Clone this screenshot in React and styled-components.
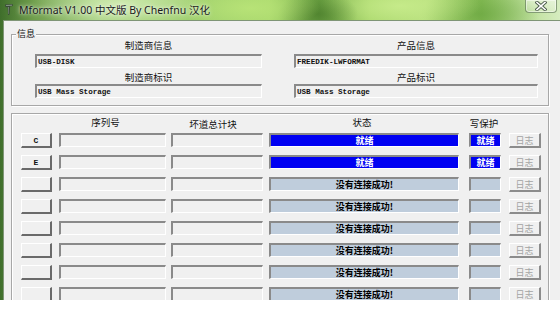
import React from "react";
import styled, { createGlobalStyle } from "styled-components";

const Global = createGlobalStyle`
  html, body { margin: 0; padding: 0; background: #ffffff; }
  body { font-family: "Noto Sans CJK SC", "Noto Sans", sans-serif; }
  * { box-sizing: border-box; }
`;

const CJK = `"Noto Sans CJK SC", "Noto Sans", sans-serif`;

const Window = styled.div`
  width: 560px;
  height: 300px;
  overflow: hidden;
  display: flex;
  flex-direction: column;
  background:
    radial-gradient(ellipse 90px 26px at 120px 4px, rgba(215, 240, 185, 0.85), transparent),
    radial-gradient(ellipse 70px 22px at 250px 8px, rgba(185, 228, 120, 0.9), transparent),
    radial-gradient(ellipse 40px 22px at 318px 14px, rgba(70, 120, 40, 0.7), transparent),
    radial-gradient(ellipse 80px 24px at 400px 6px, rgba(200, 236, 140, 0.9), transparent),
    radial-gradient(ellipse 60px 24px at 480px 14px, rgba(100, 160, 60, 0.6), transparent),
    linear-gradient(90deg, #3f6e2b 0%, #6f9e4c 6%, #a4cf80 18%, #9fcf6e 34%, #a9d86c 48%, #6da444 57%, #a8d66a 66%, #b6de7c 76%, #86bd55 86%, #c4e3a4 96%, #d6ecc0 100%);
  background-size: 100% 100%;
`;

const TitleBar = styled.div`
  height: 20px;
  flex: none;
  display: flex;
  align-items: flex-start;
  padding-left: 4px;
  padding-right: 3px;
`;

const AppIcon = styled.svg`
  width: 10px;
  height: 13px;
  margin-top: 3px;
  flex: none;
`;

const Title = styled.div`
  margin-left: 5px;
  margin-top: 3px;
  font-family: "Noto Sans", ${CJK};
  font-size: 10.5px;
  line-height: 14px;
  color: #1a1a1a;
  white-space: nowrap;
  text-shadow: 0 0 5px rgba(255, 255, 255, 0.9), 0 0 2px rgba(255, 255, 255, 0.6);
`;

const CloseButton = styled.div`
  margin-left: auto;
  width: 32px;
  height: 13px;
  border: 1px solid rgba(60, 90, 50, 0.55);
  border-top: none;
  border-radius: 0 0 4px 4px;
  background: linear-gradient(180deg, rgba(255, 255, 255, 0.45), rgba(255, 255, 255, 0.2));
  box-shadow: inset 0 0 0 1px rgba(255, 255, 255, 0.45);
  display: flex;
  align-items: center;
  justify-content: center;
`;

const Client = styled.div`
  flex: 1;
  margin-left: 3px;
  background: #f0f0f0;
  box-shadow: inset 1px 1px 0 #7f9576;
  display: flex;
  flex-direction: column;
  padding: 14px 0 0 8px;
`;

const GroupBox = styled.div`
  position: relative;
  width: 538px;
  height: 72px;
  border: 1px solid #a7a7a7;
  box-shadow: inset 1px 1px 0 #ffffff, 1px 1px 0 #ffffff;
  padding: 4px 10px 0 23px;
  display: grid;
  grid-template-columns: 227px 244px;
  column-gap: 32px;
`;

const Legend = styled.span`
  position: absolute;
  left: 4px;
  top: -7px;
  padding: 0 1px;
  background: #f0f0f0;
  font-family: ${CJK};
  font-size: 9px;
  line-height: 12px;
  color: #111;
`;

const InfoColumn = styled.div`
  display: flex;
  flex-direction: column;
`;

const InfoLabel = styled.div`
  font-family: ${CJK};
  font-size: 9.5px;
  line-height: 12px;
  text-align: center;
  color: #111;
  margin-top: ${(p) => p.$gap}px;
`;

const InfoField = styled.div`
  height: 14px;
  margin-top: ${(p) => p.$gap}px;
  border-style: solid;
  border-width: 2px 1px 1px 2px;
  border-color: #8a8a8a #ffffff #ffffff #8a8a8a;
  background: #f0f0f0;
  padding-left: 1px;
  display: flex;
  align-items: center;
  font-family: "Liberation Mono", "DejaVu Sans Mono", monospace;
  font-weight: bold;
  font-size: 7.6px;
  color: #111;
  white-space: nowrap;
`;

const Panel = styled.div`
  flex: 1;
  width: 538px;
  margin-top: 7px;
  border: 1px solid #a7a7a7;
  border-bottom: none;
  box-shadow: inset 1px 1px 0 #ffffff, 1px 0 0 #ffffff;
  padding: 1px 0 0 9px;
  display: flex;
  flex-direction: column;
`;

const HeaderRow = styled.div`
  display: flex;
  height: 14px;
  margin-bottom: 4px;
`;

const HeaderCell = styled.div`
  flex: none;
  width: ${(p) => p.$w}px;
  margin-left: ${(p) => p.$ml || 0}px;
  text-align: center;
  font-family: ${CJK};
  font-size: 9.5px;
  line-height: 14px;
  color: #111;
  transform: translate(${(p) => p.$dx || 0}px, ${(p) => p.$dy || 0}px);
`;

const Rows = styled.div`
  display: flex;
  flex-direction: column;
  gap: 7px;
`;

const Row = styled.div`
  display: flex;
  align-items: flex-start;
  height: 15px;
`;

const DriveButton = styled.div`
  flex: none;
  width: 31px;
  height: 15px;
  background: #f0f0f0;
  border-style: solid;
  border-width: 1px 2px 2px 1px;
  border-color: #ffffff #6a6a6a #6a6a6a #ffffff;
  display: flex;
  align-items: center;
  justify-content: center;
  font-family: "Liberation Mono", "DejaVu Sans Mono", monospace;
  font-weight: bold;
  font-size: 8px;
  color: #111;
`;

const Sunken = styled.div`
  flex: none;
  width: ${(p) => p.$w}px;
  margin-left: ${(p) => p.$ml}px;
  height: 14px;
  border-style: solid;
  border-width: 2px 1px 1px 2px;
  border-color: #8a8a8a #ffffff #ffffff #8a8a8a;
  background: ${(p) => (p.$state === "ready" ? "#0000f2" : p.$state === "fail" ? "#bfcddc" : "#f0f0f0")};
  display: flex;
  align-items: center;
  justify-content: center;
  font-family: ${CJK};
  font-weight: bold;
  font-size: 9px;
  line-height: 1;
  color: ${(p) => (p.$state === "ready" ? "#ffffff" : "#000000")};
  white-space: nowrap;
`;

const LogButton = styled.div`
  flex: none;
  width: 32px;
  height: 15px;
  margin-left: 8px;
  background: #f0f0f0;
  border-style: solid;
  border-width: 1px 2px 2px 1px;
  border-color: #ffffff #8c8c8c #8c8c8c #ffffff;
  display: flex;
  align-items: center;
  justify-content: center;
  font-family: ${CJK};
  font-size: 9px;
  color: #a3a3a3;
`;

const rows = [
  { drive: "C", status: "ready", text: "就绪", wp: "ready" },
  { drive: "E", status: "ready", text: "就绪", wp: "ready" },
  { drive: "", status: "fail", text: "没有连接成功!", wp: "fail" },
  { drive: "", status: "fail", text: "没有连接成功!", wp: "fail" },
  { drive: "", status: "fail", text: "没有连接成功!", wp: "fail" },
  { drive: "", status: "fail", text: "没有连接成功!", wp: "fail" },
  { drive: "", status: "fail", text: "没有连接成功!", wp: "fail" },
  { drive: "", status: "fail", text: "没有连接成功!", wp: "fail" },
];

export default function App() {
  return (
    <>
      <Global />
      <Window>
        <TitleBar>
          <AppIcon viewBox="0 0 10 13">
            <path d="M1 1.5 L8.5 1 L9 3 L6 3.5 L5.5 11.5 L4 12 L3.6 4 L1.5 4.2 Z" fill="#3b4a3a" />
            <path d="M2 2 L8 1.8 L8.2 2.5 L2.2 2.8 Z" fill="#9fb3a0" />
            <path d="M4.2 4 L5 4 L4.8 11 L4.3 11 Z" fill="#7f8f80" />
          </AppIcon>
          <Title>Mformat V1.00 中文版 By Chenfnu 汉化</Title>
          <CloseButton>
            <svg width="12" height="10" viewBox="0 0 12 10">
              <path d="M2 1.5 L10 8.5 M10 1.5 L2 8.5" stroke="#4b5a4b" strokeWidth="3.4" strokeLinecap="square" />
              <path d="M2 1.5 L10 8.5 M10 1.5 L2 8.5" stroke="#ffffff" strokeWidth="1.6" strokeLinecap="square" />
            </svg>
          </CloseButton>
        </TitleBar>
        <Client>
          <GroupBox>
            <Legend>信息</Legend>
            <InfoColumn>
              <InfoLabel $gap={0}>制造商信息</InfoLabel>
              <InfoField $gap={3}>USB-DISK</InfoField>
              <InfoLabel $gap={3}>制造商标识</InfoLabel>
              <InfoField $gap={1}>USB Mass Storage</InfoField>
            </InfoColumn>
            <InfoColumn>
              <InfoLabel $gap={0}>产品信息</InfoLabel>
              <InfoField $gap={3}>FREEDIK-LWFORMAT</InfoField>
              <InfoLabel $gap={3}>产品标识</InfoLabel>
              <InfoField $gap={1}>USB Mass Storage</InfoField>
            </InfoColumn>
          </GroupBox>
          <Panel>
            <HeaderRow>
              <HeaderCell $w={31} />
              <HeaderCell $w={107} $ml={7} $dx={-7}>序列号</HeaderCell>
              <HeaderCell $w={92} $ml={5} $dx={-4} $dy={2}>坏道总计块</HeaderCell>
              <HeaderCell $w={190} $ml={6} $dx={-2}>状态</HeaderCell>
              <HeaderCell $w={32} $ml={10} $dx={-1} $dy={1}>写保护</HeaderCell>
            </HeaderRow>
            <Rows>
              {rows.map((r, i) => (
                <Row key={i}>
                  <DriveButton>{r.drive}</DriveButton>
                  <Sunken $w={107} $ml={7} />
                  <Sunken $w={92} $ml={5} />
                  <Sunken $w={190} $ml={6} $state={r.status}>{r.text}</Sunken>
                  <Sunken $w={32} $ml={10} $state={r.wp}>{r.wp === "ready" ? "就绪" : ""}</Sunken>
                  <LogButton>日志</LogButton>
                </Row>
              ))}
            </Rows>
          </Panel>
        </Client>
      </Window>
    </>
  );
}
